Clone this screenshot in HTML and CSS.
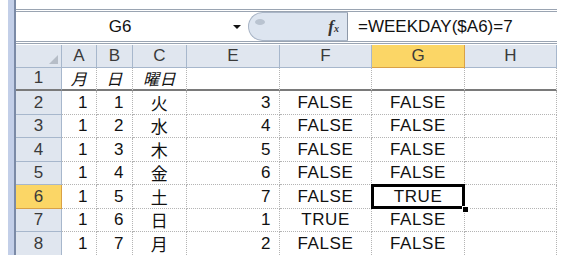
FILE: index.html
```html
<!DOCTYPE html>
<html lang="ja">
<head>
    <meta charset="UTF-8">
    <title>WEEKDAY</title>
    <link rel="stylesheet" href="styles.css">
</head>
<body>
<div class="app">
    <div class="strip"></div>
    <div class="main">
        <div class="formula-bar">
            <div class="name-box">
                <span class="name">G6</span>
                <span class="arrow"></span>
            </div>
            <div class="fx-area">
                <span class="knob"></span>
                <span class="fx"><i>f</i><small>x</small></span>
            </div>
            <div class="formula">=WEEKDAY($A6)=7</div>
        </div>

        <div class="sheet">
            <div class="hd corner"><span class="tri"></span></div>
            <div class="hd">A</div>
            <div class="hd">B</div>
            <div class="hd">C</div>
            <div class="hd">E</div>
            <div class="hd">F</div>
            <div class="hd sel">G</div>
            <div class="hd">H</div>

            <div class="rh frz">1</div>
            <div class="c ctr it frz">月</div>
            <div class="c ctr it frz">日</div>
            <div class="c ctr it frz">曜日</div>
            <div class="c frz"></div>
            <div class="c frz"></div>
            <div class="c frz"></div>
            <div class="c frz"></div>

            <div class="rh">2</div>
            <div class="c num">1</div><div class="c num">1</div><div class="c ctr jp">火</div><div class="c num">3</div>
            <div class="c ctr">FALSE</div><div class="c ctr">FALSE</div><div class="c"></div>

            <div class="rh">3</div>
            <div class="c num">1</div><div class="c num">2</div><div class="c ctr jp">水</div><div class="c num">4</div>
            <div class="c ctr">FALSE</div><div class="c ctr">FALSE</div><div class="c"></div>

            <div class="rh">4</div>
            <div class="c num">1</div><div class="c num">3</div><div class="c ctr jp">木</div><div class="c num">5</div>
            <div class="c ctr">FALSE</div><div class="c ctr">FALSE</div><div class="c"></div>

            <div class="rh">5</div>
            <div class="c num">1</div><div class="c num">4</div><div class="c ctr jp">金</div><div class="c num">6</div>
            <div class="c ctr">FALSE</div><div class="c ctr">FALSE</div><div class="c"></div>

            <div class="rh sel">6</div>
            <div class="c num">1</div><div class="c num">5</div><div class="c ctr jp">土</div><div class="c num">7</div>
            <div class="c ctr">FALSE</div><div class="c ctr active">TRUE<span class="handle"></span></div><div class="c"></div>

            <div class="rh">7</div>
            <div class="c num">1</div><div class="c num">6</div><div class="c ctr jp">日</div><div class="c num">1</div>
            <div class="c ctr">TRUE</div><div class="c ctr">FALSE</div><div class="c"></div>

            <div class="rh last">8</div>
            <div class="c num last">1</div><div class="c num last">7</div><div class="c ctr jp last">月</div><div class="c num last">2</div>
            <div class="c ctr last">FALSE</div><div class="c ctr last">FALSE</div><div class="c last"></div>
        </div>
    </div>
</div>
</body>
</html>
```

FILE: styles.css
```css
* {
    margin: 0;
    padding: 0;
    box-sizing: border-box;
}

body {
    background: #fff;
    font-family: "Liberation Sans", Arial, "Noto Sans CJK JP", sans-serif;
    color: #111;
}

.app {
    display: flex;
    margin-left: 8px;
    width: 549px;
}

.strip {
    width: 8px;
    background: #c3cfe8;
    border-right: 2px solid #7b8aa6;
}

.main {
    flex: 1;
    padding-top: 9px;
}

/* formula bar */

.formula-bar {
    display: flex;
    height: 35px;
    border-top: 3px double #9aa4b2;
    border-bottom: 3px double #9aa4b2;
}

.name-box {
    width: 232px;
    display: flex;
    align-items: center;
}

.name {
    width: 208px;
    text-align: center;
    font-size: 17px;
}

.arrow {
    margin-left: 9px;
    border-left: 4px solid transparent;
    border-right: 4px solid transparent;
    border-top: 4px solid #111;
}

.fx-area {
    width: 100px;
    display: flex;
    align-items: center;
    justify-content: space-between;
    padding: 0 8px 0 6px;
    background: #dde5f0;
    border: 1px solid #a9b5c6;
    border-right-color: #8d98a8;
    border-radius: 16px 0 0 16px;
}

.knob {
    width: 10px;
    height: 6px;
    margin-top: -10px;
    border-radius: 50%;
    background: #b9c3d0;
}

.fx {
    font-family: "Liberation Serif", serif;
    font-weight: bold;
    color: #333;
}

.fx i {
    font-size: 17px;
}

.fx small {
    font-size: 10px;
    font-style: italic;
}

.formula {
    flex: 1;
    padding-left: 10px;
    display: flex;
    align-items: center;
    font-size: 17px;
}

/* sheet */

.sheet {
    display: grid;
    grid-template-columns: 46px 35px 36px 54px 93px 92px 93px 92px;
    grid-template-rows: 23px 23px repeat(6, 23.5px) 23px;
    margin-top: 1px;
    font-size: 16px;
}

.hd, .rh {
    background: #e0e6ef;
    color: #3a3a3a;
    border-right: 1px solid #a7b7cc;
    border-bottom: 1px solid #a7b7cc;
    display: flex;
    align-items: center;
    justify-content: center;
    font-size: 17px;
}

.rh {
    align-items: flex-end;
    padding-bottom: 1px;
}

.hd.sel, .rh.sel {
    background: #fbd666;
    border-color: #d9a146;
}

.corner {
    justify-content: flex-end;
    align-items: flex-end;
    padding: 0 3px 3px 0;
}

.tri {
    border-left: 9px solid transparent;
    border-bottom: 9px solid #b6bdc7;
}

.c {
    position: relative;
    border-right: 1px dotted #b4b4b4;
    border-bottom: 1px dotted #b4b4b4;
    display: flex;
    align-items: flex-end;
    padding-bottom: 1px;
    letter-spacing: 0.6px;
    font-size: 17px;
}

.frz, .rh.frz {
    border-bottom: 2px solid #7a7a7a;
}

.last, .rh.last {
    border-bottom: none;
}

.num {
    justify-content: flex-end;
    padding-right: 8px;
}

.ctr {
    justify-content: center;
}

.it {
    font-style: italic;
    font-family: "Noto Sans CJK JP", sans-serif;
    font-size: 16px;
    line-height: 20px;
}

.jp {
    font-family: "Noto Sans CJK JP", sans-serif;
    font-size: 17px;
    line-height: 20px;
}

.active::after {
    content: "";
    position: absolute;
    left: -1px;
    top: -1px;
    right: -1px;
    bottom: -1px;
    border: 3px solid #000;
}

.handle {
    position: absolute;
    right: -5px;
    bottom: -5px;
    width: 7px;
    height: 7px;
    background: #000;
    border: 1px solid #fff;
    z-index: 1;
}
```
